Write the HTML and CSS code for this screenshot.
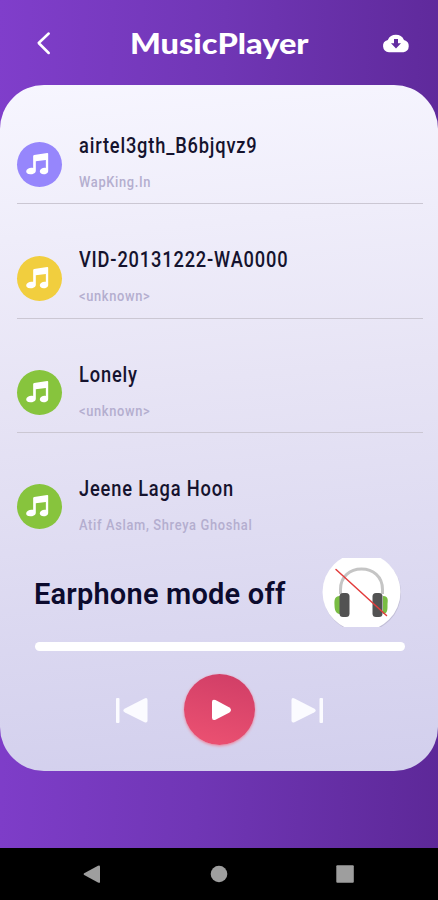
FILE: index.html
```html
<!DOCTYPE html>
<html lang="en">
<head>
<meta charset="utf-8">
<title>MusicPlayer</title>
<link rel="stylesheet" href="styles.css">
</head>
<body>
<svg width="0" height="0" class="defs">
  <symbol id="note" viewBox="0 0 44 44">
    <path fill="#fff" d="M15.800 13.800Q15.800 12.900 16.700 12.700L29.500 10.800Q30.500 10.700 30.500 11.600V28C30.500 30.500 28.200 31.500 26 31.500S22 30.200 22.300 28.400C22.600 26.200 25.500 24.600 28.200 25.300V17.600L18.400 18.800V28C18.200 30.500 15.700 31.500 12.900 31.500S8.800 30.200 9 28.400C9.400 26.100 12.700 24.500 15.800 25.300Z"/>
  </symbol>
</svg>
<div class="app">
  <header class="header">
    <svg class="back" viewBox="0 0 16 24"><path d="M12.700 2.500 2.700 12l10 10" fill="none" stroke="#fff" stroke-width="2.500" stroke-linecap="round" stroke-linejoin="round"/></svg>
    <h1><span>MusicPlayer</span></h1>
    <svg class="cloud" viewBox="0 0 28 20"><path fill="#fff" fill-rule="evenodd" d="M7 19.300A6.300 6.300 0 0 1 5.800 6.900 9 9 0 0 1 22 6.900 6.350 6.350 0 0 1 21.500 19.300ZM12 6V10.200H9L14 15.600l5-5.400H16V6Z"/></svg>
  </header>
  <main class="card">
    <ul class="songs">
      <li><svg class="disc violet"><use href="#note"/></svg><div class="info"><div class="name"><span>airtel3gth_B6bjqvz9</span></div><div class="artist"><span>WapKing.In</span></div></div></li>
      <li><svg class="disc yellow"><use href="#note"/></svg><div class="info"><div class="name"><span>VID-20131222-WA0000</span></div><div class="artist"><span>&lt;unknown&gt;</span></div></div></li>
      <li><svg class="disc green"><use href="#note"/></svg><div class="info"><div class="name"><span>Lonely</span></div><div class="artist"><span>&lt;unknown&gt;</span></div></div></li>
      <li><svg class="disc green"><use href="#note"/></svg><div class="info"><div class="name"><span>Jeene Laga Hoon</span></div><div class="artist"><span>Atif Aslam, Shreya Ghoshal</span></div></div></li>
    </ul>
    <section class="mode">
      <h2>Earphone mode off</h2>
      <svg class="earphone" viewBox="0 0 84 72">
        <defs><clipPath id="cut"><rect y="1" width="84" height="69"/></clipPath></defs>
        <g clip-path="url(#cut)">
          <circle cx="42" cy="36" r="39" fill="#a9a5bd" opacity=".5"/>
          <circle cx="41.500" cy="35" r="39" fill="#fff"/>
        </g>
        <path d="M20.500 37V32.500C20.500 19.500 30 12 41.500 12S62.500 19.500 62.500 32.500V37" fill="none" stroke="#c5c5c5" stroke-width="3"/>
        <path d="M20 39C13.500 39 14.500 45 14.500 48S15 57 20 57ZM63 39C69.500 39 67.500 45 67.500 48S68 57 63 57Z" fill="#79bd43"/>
        <rect x="19.500" y="36" width="10" height="24" rx="3.500" fill="#525252"/>
        <rect x="52.500" y="36" width="10" height="24" rx="3.500" fill="#525252"/>
        <path d="M16 12.500 66.500 58.500" stroke="#e33c3c" stroke-width="1.500" stroke-linecap="round"/>
      </svg>
    </section>
    <div class="progress"></div>
    <div class="controls">
      <svg class="skip" viewBox="0 0 34 28"><rect x="1" y="2" width="3.500" height="25" rx="1" fill="#fbfbff"/><path d="M10 12.500 29 2.700Q32.500 1 32.500 4V24.500Q32.500 27.500 29 26L10 16.500Q6.500 14.500 10 12.500Z" fill="#fbfbff"/></svg>
      <button class="play" aria-label="Play"><svg viewBox="0 0 22 24"><path d="M2 4Q2 .7 5.500 2L19.500 9.500Q22.500 12 19.500 14.500L5.500 21.700Q2 23 2 19.500Z" fill="#fff"/></svg></button>
      <svg class="skip next" viewBox="0 0 34 28"><rect x="1" y="2" width="3.500" height="25" rx="1" fill="#fbfbff"/><path d="M10 12.500 29 2.700Q32.500 1 32.500 4V24.500Q32.500 27.500 29 26L10 16.500Q6.500 14.500 10 12.500Z" fill="#fbfbff"/></svg>
    </div>
  </main>
  <nav class="navbar">
    <svg viewBox="0 0 18 18"><path d="M1.200 8.200 15 .7Q17 0 17 1.500V17Q17 18.400 15 17.500L1.200 10Q0 9.100 1.200 8.200Z"/></svg>
    <svg viewBox="0 0 18 18"><circle cx="9" cy="9" r="8.300"/></svg>
    <svg viewBox="0 0 18 18"><rect x=".3" y=".3" width="17.500" height="17.500" rx="1"/></svg>
  </nav>
</div>
</body>
</html>
```
FILE: styles.css
```css
* { box-sizing: border-box; margin: 0; padding: 0; }
body { width: 438px; height: 900px; overflow: hidden; font-family: Roboto, "Liberation Sans", sans-serif; }
.defs { display: block; height: 0; }
svg { display: block; flex: none; }
.app { height: 900px; display: flex; flex-direction: column; background: linear-gradient(92deg, #803ecb 0%, #7036b5 48%, #5d2898 100%); }
.header { height: 85px; display: flex; align-items: center; justify-content: space-between; padding: 0 28px 0 36px; }
.back { width: 16px; height: 24px; }
.cloud { width: 28px; height: 20px; margin-top: 1px; }
h1 { width: 178px; margin-left: 3px; font: 900 29px/40px Lato, sans-serif; color: #fff; white-space: nowrap; }
h1 span { display: inline-block; transform-origin: left; transform: scaleX(1.12); }
.card { height: 686px; padding: 5px 17px 0; border-radius: 44px; background: linear-gradient(175deg, #f7f6ff 0%, #e7e4f5 43%, #d2cfed 100%); }
.songs { list-style: none; }
.songs li { height: 114.330px; display: flex; gap: 17px; padding-top: 41px; border-bottom: 1.500px solid #cbc7d3; margin-right: -2px; }
.songs li:last-child { border-color: transparent; }
.disc { width: 45px; height: 45px; margin-top: 10.500px; border-radius: 50%; }
.violet { background: #9686fc; }
.yellow { background: #f1ce3e; }
.green { background: #87c43d; }
.name { height: 29px; font-size: 22px; line-height: 29px; font-weight: 500; color: #15132e; white-space: nowrap; letter-spacing: 1px; }
.artist { margin-top: 11px; font-size: 15.500px; line-height: 22px; font-weight: 500; color: #b4aecf; white-space: nowrap; letter-spacing: .8px; }
.name span, .artist span { display: inline-block; transform-origin: left; transform: scaleX(.83); }
.mode { height: 72px; margin-top: 10px; display: flex; align-items: center; justify-content: space-between; padding: 0 17px 0 17px; }
h2 { margin-top: 2px; font-size: 29px; line-height: 40px; font-weight: 600; letter-spacing: .2px; color: #0c0b2e; white-space: nowrap; }
.earphone { width: 84px; height: 72px; }
.progress { height: 9px; margin: 13px 16px 0 18px; border-radius: 5px; background: #fff; }
.controls { display: flex; align-items: center; justify-content: center; gap: 35px; margin: 23px 0 0 1px; }
.skip { width: 34px; height: 28px; margin-top: 1px; }
.next { transform: scaleX(-1); }
.play { width: 71px; height: 71px; border: 0; border-radius: 50%; display: flex; align-items: center; justify-content: center; background: linear-gradient(195deg, #cf3d66, #ed5272); box-shadow: 0 1px 3px #ef8094; }
.play svg { width: 22px; height: 24px; margin-left: 3px; }
.navbar { height: 52px; margin-top: auto; background: #000; display: flex; align-items: center; justify-content: space-between; padding: 0 84px 0 83px; }
.navbar svg { width: 18px; height: 18px; fill: #9e9e9e; }
```
